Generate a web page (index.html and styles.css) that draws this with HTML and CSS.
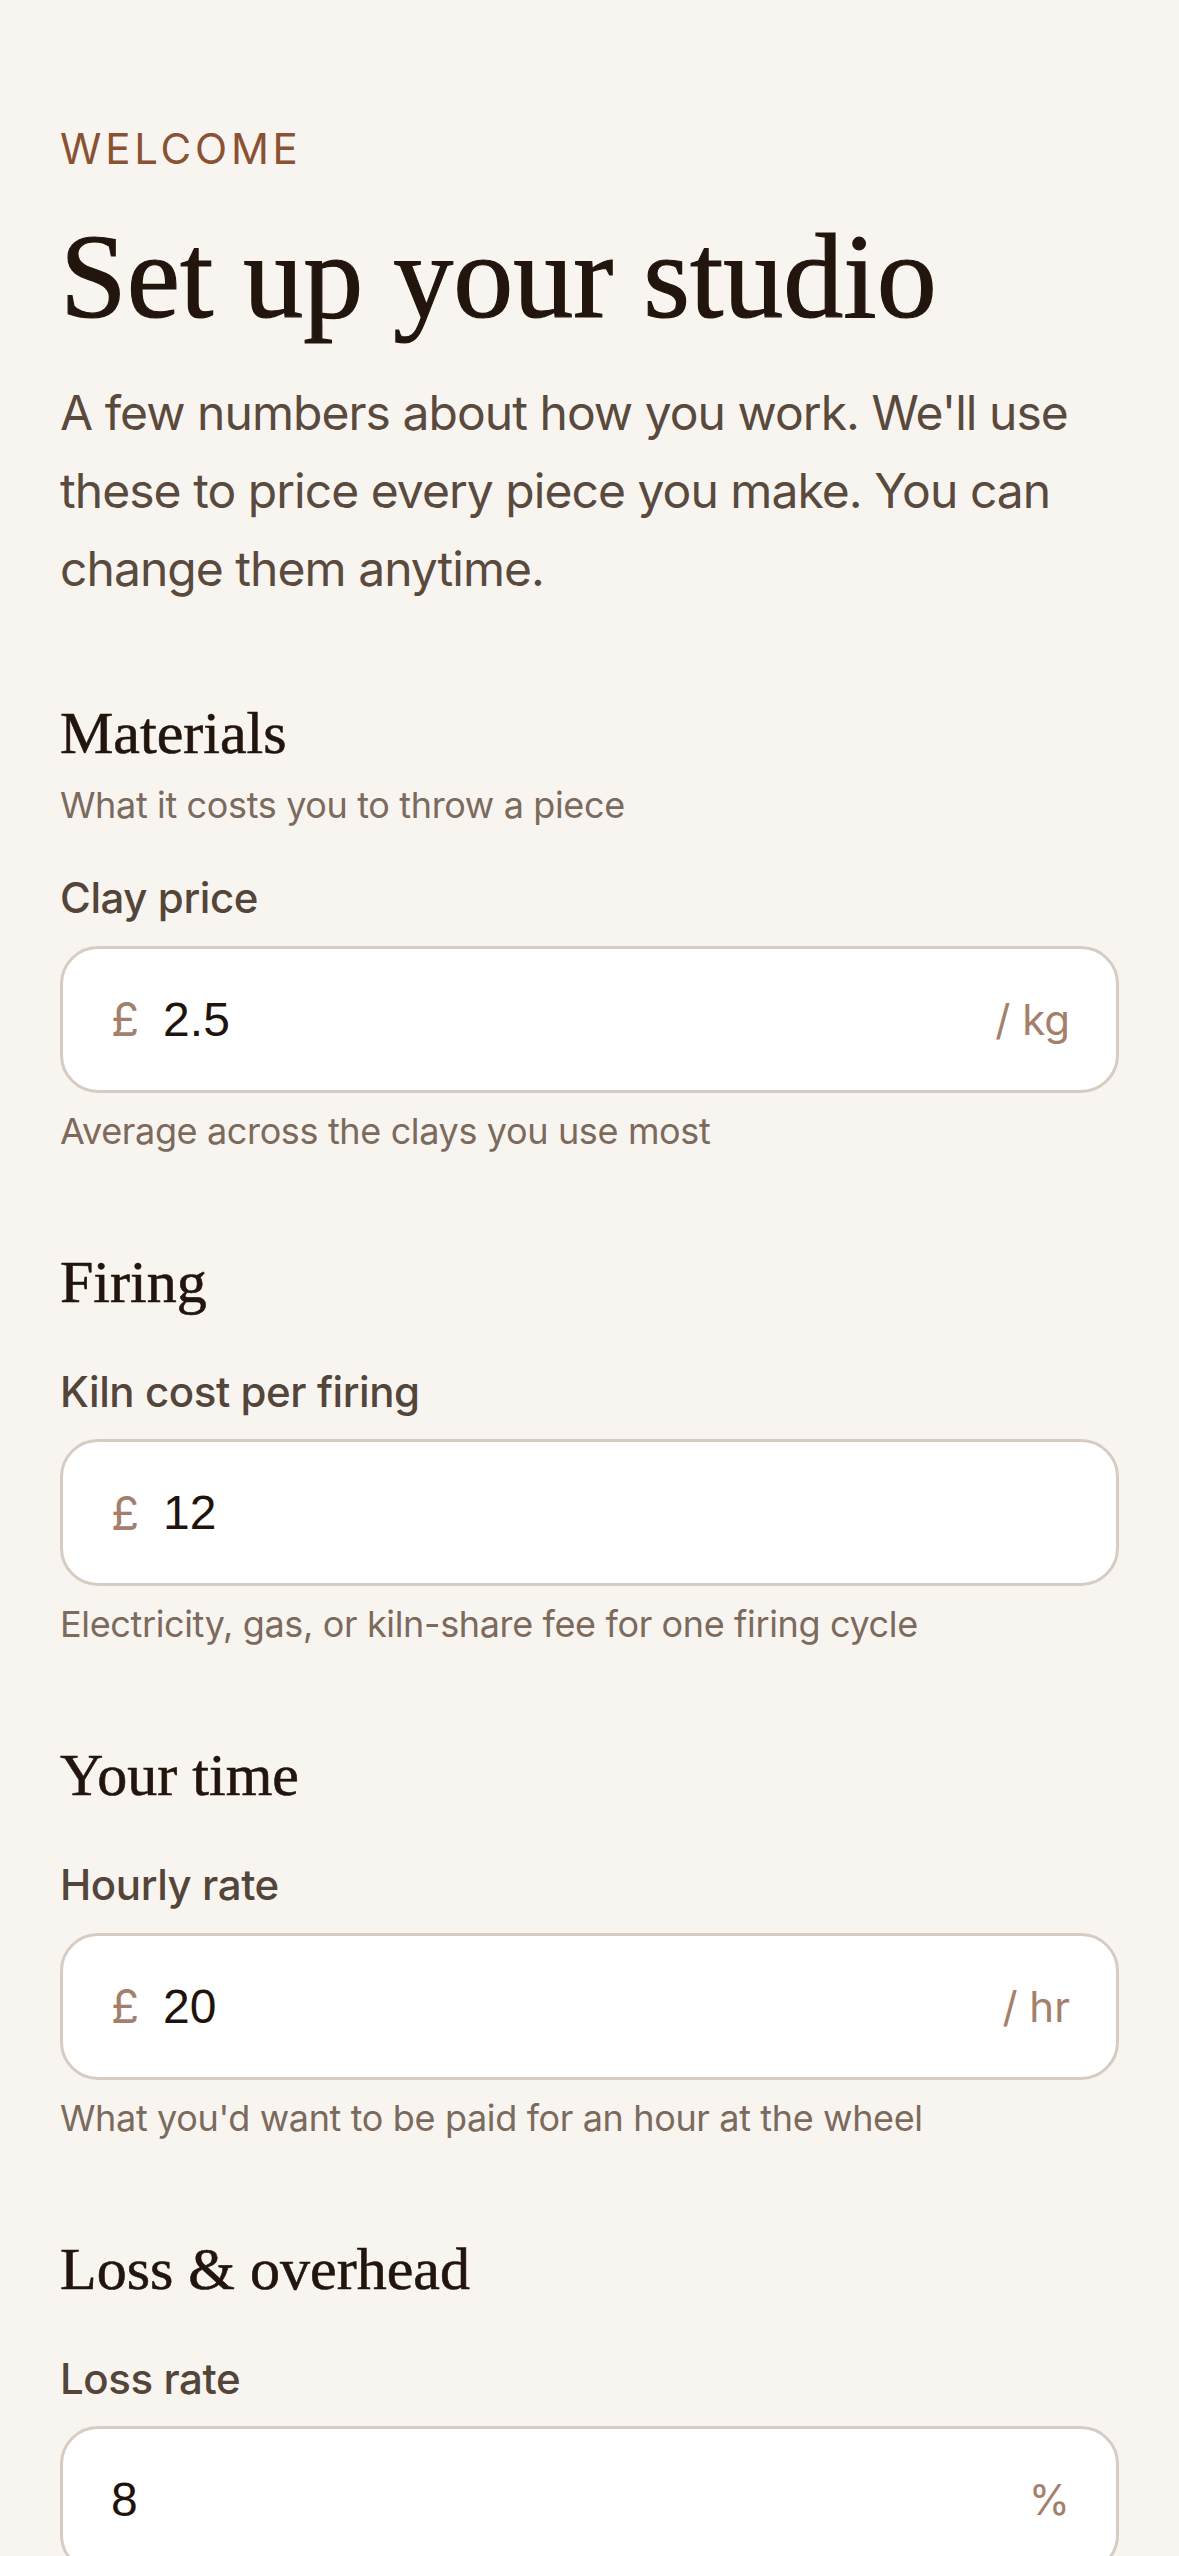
FILE: index.html
```
<!DOCTYPE html>
<html lang="en">
<head>
    <meta charset="UTF-8">
    <meta name="viewport" content="width=device-width, initial-scale=1.0">
    <title>Set up your studio</title>
    <link rel="stylesheet" href="styles.css">
</head>
<body>
    <main class="page">
        <p class="eyebrow">WELCOME</p>
        <h1 class="title">Set up your studio</h1>
        <p class="intro">A few numbers about how you work. We'll use these to price every piece you make. You can change them anytime.</p>

        <section class="group">
            <h2 class="group-title">Materials</h2>
            <p class="group-note">What it costs you to throw a piece</p>
            <label class="field-label" for="clay">Clay price</label>
            <div class="input-box">
                <span class="prefix">£</span>
                <input type="text" id="clay" value="2.5">
                <span class="suffix">/ kg</span>
            </div>
            <p class="hint">Average across the clays you use most</p>
        </section>

        <section class="group">
            <h2 class="group-title">Firing</h2>
            <label class="field-label" for="kiln">Kiln cost per firing</label>
            <div class="input-box">
                <span class="prefix">£</span>
                <input type="text" id="kiln" value="12">
            </div>
            <p class="hint">Electricity, gas, or kiln-share fee for one firing cycle</p>
        </section>

        <section class="group">
            <h2 class="group-title">Your time</h2>
            <label class="field-label" for="rate">Hourly rate</label>
            <div class="input-box">
                <span class="prefix">£</span>
                <input type="text" id="rate" value="20">
                <span class="suffix">/ hr</span>
            </div>
            <p class="hint">What you'd want to be paid for an hour at the wheel</p>
        </section>

        <section class="group">
            <h2 class="group-title">Loss &amp; overhead</h2>
            <label class="field-label" for="loss">Loss rate</label>
            <div class="input-box">
                <input type="text" id="loss" value="8">
                <span class="suffix">%</span>
            </div>
        </section>
    </main>
</body>
</html>
```
FILE: styles.css
```
body {
    margin: 0;
    background-color: #f8f5f0;
    font-family: Inter, "Open Sans", sans-serif;
    color: #5a4a3d;
}
.page {
    padding: 128px 60px 120px;
}
.eyebrow {
    margin: 0;
    font-size: 42px;
    line-height: 42px;
    letter-spacing: 0.09em;
    color: #8a5132;
}
.title {
    margin: 40px 0 0;
    font-family: "Liberation Serif", serif;
    font-weight: normal;
    font-size: 120px;
    line-height: 134px;
    color: #22150d;
    -webkit-text-stroke: 1.2px #22150d;
}
.intro {
    margin: 30px 0 0;
    font-size: 48px;
    line-height: 78px;
    letter-spacing: -0.02em;
    color: #5a4a3d;
}
.group {
    margin-top: 95px;
    display: flex;
    flex-direction: column;
}
.group:first-of-type {
    margin-top: 93px;
}
.group-title {
    margin: -1px 0 0;
    font-family: "Liberation Serif", serif;
    font-weight: normal;
    font-size: 60px;
    line-height: 67px;
    color: #22150d;
    -webkit-text-stroke: 0.6px #22150d;
}
.group-note {
    margin: 14px 0 -7px;
    font-size: 36px;
    line-height: 48px;
    letter-spacing: -0.01em;
    color: #7c6a5d;
}
.field-label {
    margin-top: 49px;
    font-size: 42px;
    line-height: 1.3;
    font-weight: 500;
    letter-spacing: -0.01em;
    color: #54453a;
}
.input-box {
    margin-top: 20px;
    height: 141px;
    display: flex;
    align-items: center;
    gap: 24px;
    padding: 0 46px 0 48px;
    background: #fff;
    border: 3px solid #d7ccc2;
    border-radius: 38px;
}
.prefix {
    font-size: 46px;
    color: #a4806c;
}
.suffix {
    font-size: 42px;
    color: #a4806c;
}
.input-box input {
    flex: 1;
    min-width: 0;
    border: none;
    outline: none;
    padding: 0;
    background: transparent;
    font-family: "Liberation Sans", Arial, sans-serif;
    font-size: 48px;
    color: #1f140d;
}
.hint {
    margin: 14px 0 0;
    font-size: 36px;
    line-height: 48px;
    letter-spacing: -0.01em;
    color: #7c6a5d;
}
```
